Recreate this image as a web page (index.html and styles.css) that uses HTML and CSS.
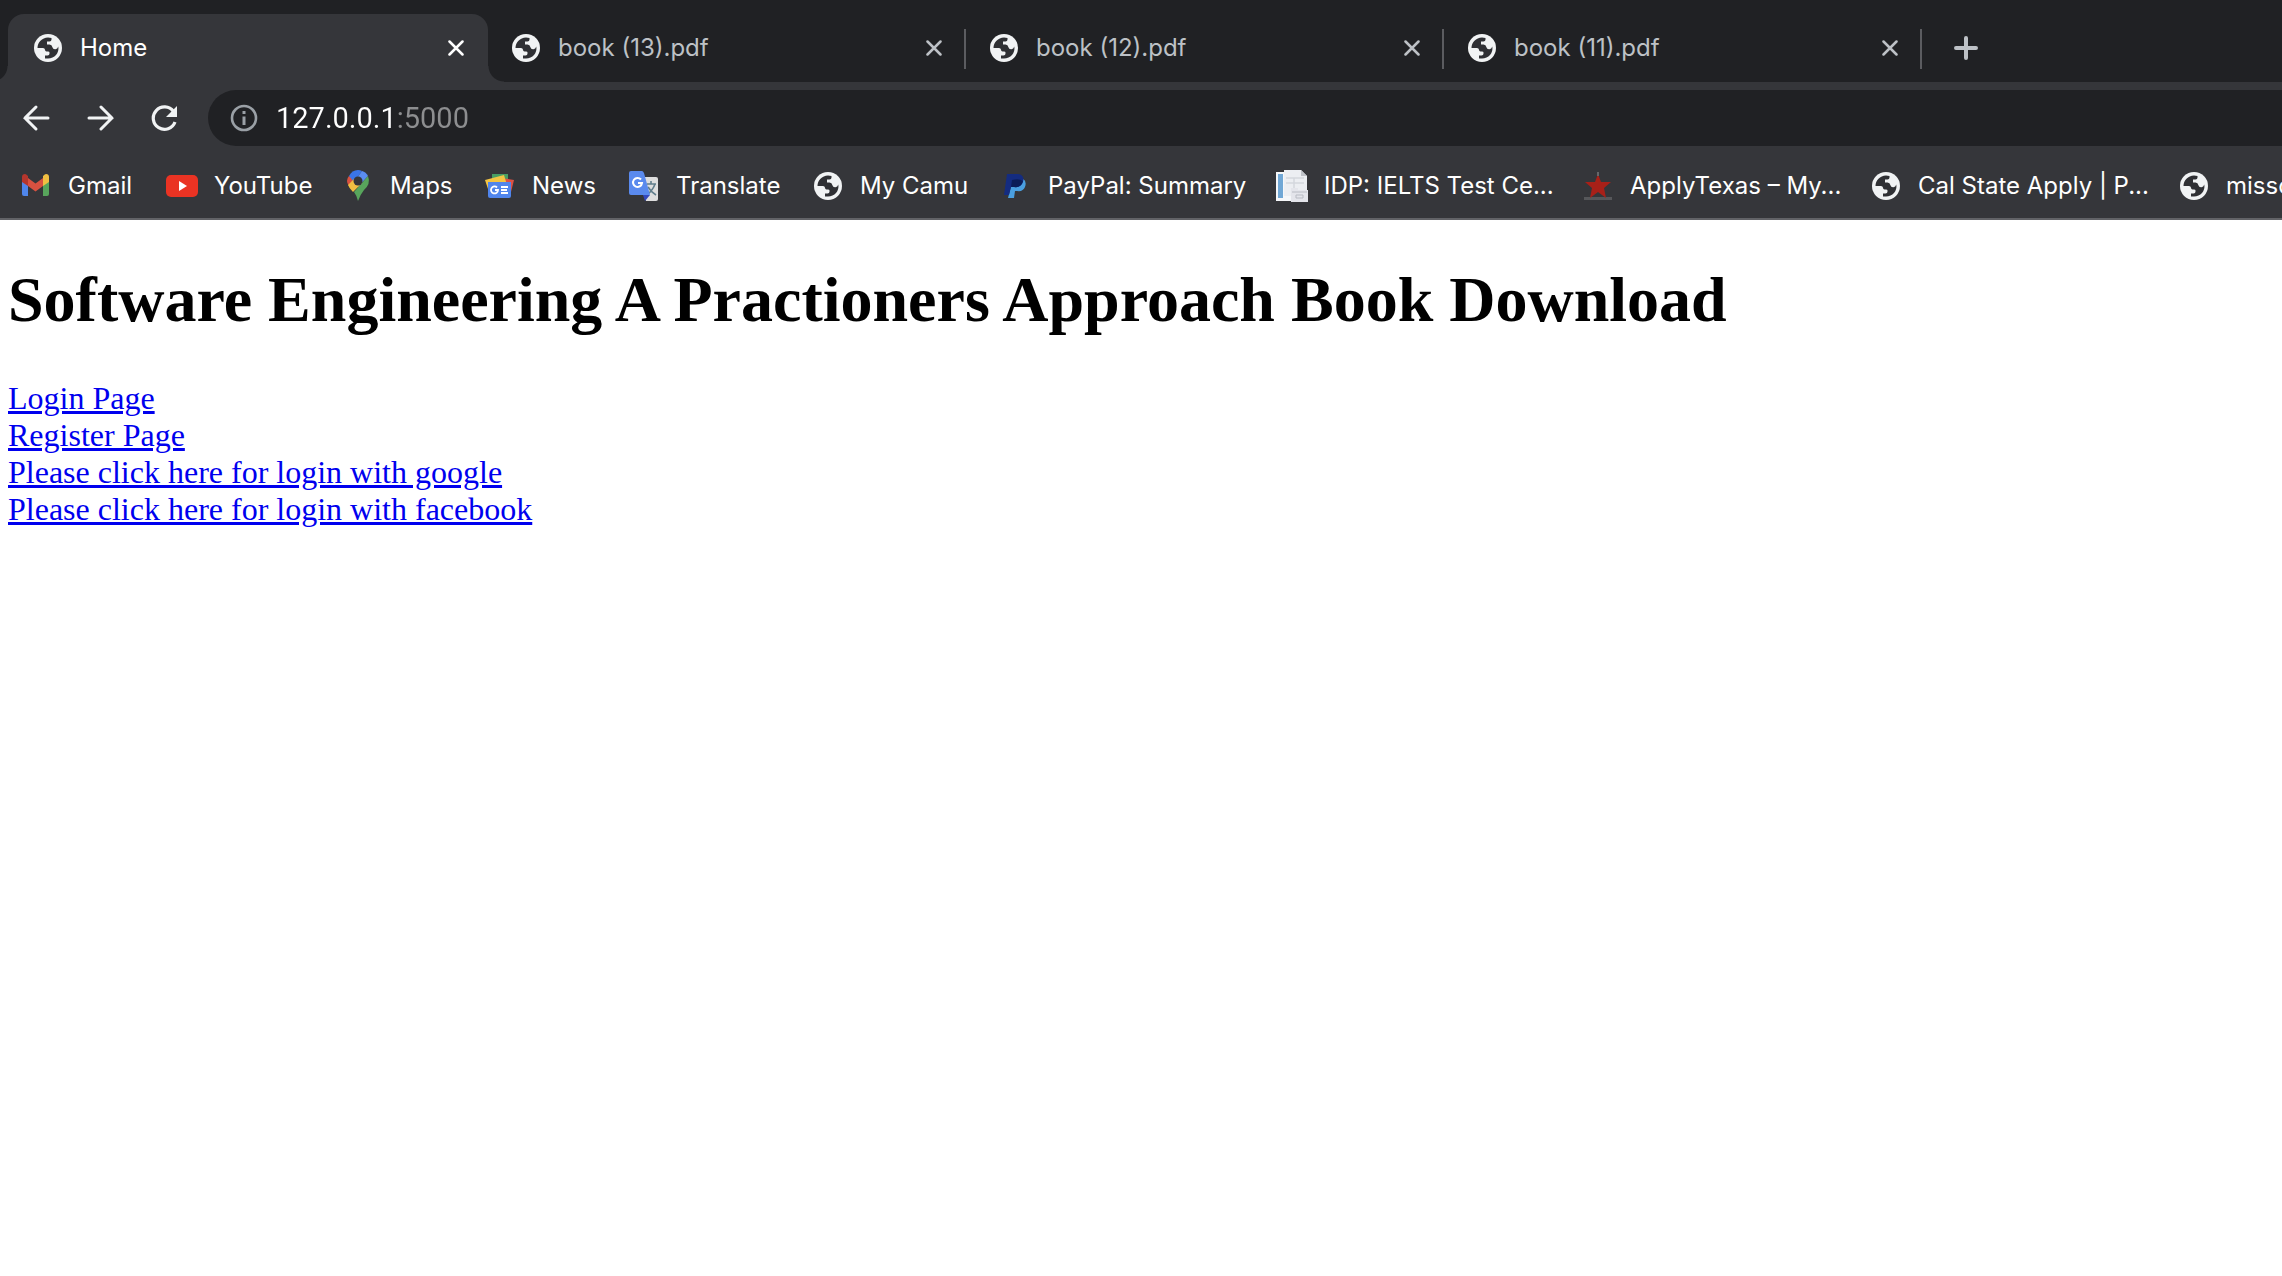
FILE: index.html
```html
<!DOCTYPE html>
<html lang="en">
<head>
<meta charset="utf-8">
<title>Home</title>
<link rel="stylesheet" href="styles.css">
</head>
<body>
<svg class="defs" aria-hidden="true">
  <symbol id="globe" viewBox="0 0 28 28">
    <circle cx="14" cy="14" r="14" fill="#f1f3f4"/>
    <path fill="#2f3034" d="M3.5 14C3.5 8.5 8 3.8 14 3.5L17.5 4V5.5Q17.5 7.5 15.5 7.5H13V10.5H15.5Q18 10.7 18.3 13Q19 15.7 21.5 15.3Q23.500 15 24.3 12.500C25.500 19 20.500 24.500 14 24.500H11V21.500H13.500Q15.500 21.300 15.500 19.500V18.500Q15.500 17.500 14 17.500H12.500Q11 17.500 11 15.800Q10.800 14 9 14Z"/>
  </symbol>
  <symbol id="close" viewBox="0 0 16 16">
    <path d="M1.500 1.500L14.500 14.500M14.500 1.500L1.500 14.500" fill="none" stroke="currentColor" stroke-width="2.500" stroke-linecap="round"/>
  </symbol>
</svg>
<header class="browser">
  <nav class="tabs" aria-label="Tabs">
    <div class="tab active">
      <svg class="favicon"><use href="#globe"/></svg>
      <span class="tab-title">Home</span>
      <button class="close" aria-label="Close Home"><svg><use href="#close"/></svg></button>
    </div>
    <div class="tab">
      <svg class="favicon"><use href="#globe"/></svg>
      <span class="tab-title">book (13).pdf</span>
      <button class="close" aria-label="Close book (13).pdf"><svg><use href="#close"/></svg></button>
    </div>
    <div class="tab">
      <svg class="favicon"><use href="#globe"/></svg>
      <span class="tab-title">book (12).pdf</span>
      <button class="close" aria-label="Close book (12).pdf"><svg><use href="#close"/></svg></button>
    </div>
    <div class="tab">
      <svg class="favicon"><use href="#globe"/></svg>
      <span class="tab-title">book (11).pdf</span>
      <button class="close" aria-label="Close book (11).pdf"><svg><use href="#close"/></svg></button>
    </div>
    <button class="new-tab" aria-label="New tab">
      <svg viewBox="0 0 24 24"><path d="M12 2V22M2 12H22" fill="none" stroke="currentColor" stroke-width="4" stroke-linecap="round"/></svg>
    </button>
  </nav>
  <div class="toolbar">
    <button class="nav-button" aria-label="Back">
      <svg viewBox="0 0 28 28"><path d="M14 3L3 14L14 25M3 14H26" fill="none" stroke="currentColor" stroke-width="3" stroke-linecap="round"/></svg>
    </button>
    <button class="nav-button" aria-label="Forward">
      <svg viewBox="0 0 28 28"><path d="M15 3L26 14L15 25M26 14H3" fill="none" stroke="currentColor" stroke-width="3" stroke-linecap="round"/></svg>
    </button>
    <button class="nav-button" aria-label="Reload">
      <svg viewBox="0 0 28 28"><path d="M23.500 7.500A11.200 11.200 0 1 0 25 18" fill="none" stroke="currentColor" stroke-width="3.200"/><path d="M27 2V13H16Z" fill="currentColor"/></svg>
    </button>
    <label class="omnibox">
      <svg viewBox="0 0 28 28"><circle cx="14" cy="14" r="12" fill="none" stroke="currentColor" stroke-width="2.600"/><path d="M12.500 7H15.500V10H12.500ZM12.500 12.500H15.500V21H12.500Z" fill="currentColor"/></svg>
      <input type="text" value="127.0.0.1:5000" aria-label="Address">
    </label>
  </div>
  <nav class="bookmarks" aria-label="Bookmarks">
    <a href="#"><svg viewBox="0 0 32 32"><path d="M2 10V24Q2 26 4 26H8V13Z" fill="#4f86ec"/><path d="M23 13V26H27Q29 26 29 24V10Z" fill="#58a55c"/><path d="M8 8L15.500 13.500L23 8V16L15.500 21.500L8 16Z" fill="#d85140"/><path d="M2 11V7Q2 4 5 4Q6 4 8 6V16L2 12Z" fill="#b5362d"/><path d="M29 11V7Q29 4 26 4Q25 4 23 6V16L29 12Z" fill="#f1bf42"/></svg><span>Gmail</span></a>
    <a href="#"><svg viewBox="0 0 32 32"><rect x="0" y="5" width="32" height="22" rx="5" fill="#ea3323"/><path d="M13 11V21L21 16Z" fill="#fff"/></svg><span>YouTube</span></a>
    <a href="#"><svg viewBox="0 0 32 32"><path d="M7 6L16 11L10 20Q5 14 5 11Q5 8 7 6Z" fill="#d85140"/><path d="M7 6Q10 0 16 0Q18 0 20 1L12 12Z" fill="#3a75e8"/><path d="M20 1Q24 2 26 6L16 17L12 12Z" fill="#5a8df0"/><path d="M26 6Q29 14 22 20Q18 25 16 31Q15 26 12 22Z" fill="#58a55c"/><path d="M6 15L12 9L20 13L11 22Q7 18 6 15Z" fill="#f1bf42"/><circle cx="16" cy="11" r="4.500" fill="#35363a"/></svg><span>Maps</span></a>
    <a href="#"><svg viewBox="0 0 32 32"><rect x="8" y="4" width="16" height="12" fill="#489e63"/><path d="M18 8L30 10L27 22L17 18Z" fill="#dc5044"/><path d="M1 10L20 5L23 15L5 22Z" fill="#f3c443"/><path d="M4 12H27V26Q27 28 25 28H6Q4 28 4 26Z" fill="#5085ec"/><path d="M13 17.500A3.500 3.500 0 1 0 14 20H11M17 17H24M17 20H23M17 23H24" stroke="#fff" stroke-width="1.800" fill="none"/></svg><span>News</span></a>
    <a href="#"><svg viewBox="0 0 32 32"><path d="M14 7H28Q30 7 30 9V29Q30 31 28 31H18Z" fill="#dedede"/><path d="M19 14H28M23 11V14M27 14Q25 20 19 25M20 17Q23 22 28 25" stroke="#607d8b" stroke-width="1.600" fill="none"/><path d="M15 25H22L17 31Z" fill="#3448bd"/><path d="M3 1H14Q15 1 16 3L22 25H3Q1 25 1 23V3Q1 1 3 1Z" fill="#5a8aee"/><path d="M13 9.500A4.500 4.500 0 1 0 14 13H10" stroke="#fff" stroke-width="2" fill="none"/></svg><span>Translate</span></a>
    <a href="#"><svg viewBox="0 0 32 32"><use href="#globe" x="2" y="2" width="28" height="28"/></svg><span>My Camu</span></a>
    <a href="#"><svg viewBox="0 0 32 32"><path d="M13 9H23Q27 11 25 17Q23 22 17 21H15L14 28H8Z" fill="#4a9fe0"/><path d="M7 4H18Q25 5 23 12Q21 18 14 17H11L9 25H4Z" fill="#142c80"/><path d="M12 10Q19 8 23 11Q21 18 14 17H11Z" fill="#0b1d58"/></svg><span>PayPal: Summary</span></a>
    <a href="#"><svg viewBox="0 0 32 32"><path d="M0 2H16V31H0Z" fill="#f5f7f9"/><path d="M2 4H7V28H2Z" fill="#70a7d5"/><path d="M8 0H25L31 6V26H8Z" fill="#eceef2"/><path d="M25 0V6H31Z" fill="#bfc2c8"/><path d="M10 8H28M10 13H28M18 8V20" stroke="#d4d7dd" stroke-width="1.500"/><path d="M15 18H22V20H32V32H15Z" fill="#e4e5eb"/><path d="M16 22H31M20 25H27V28H20Z" stroke="#b8bbc3" fill="none"/></svg><span>IDP: IELTS Test Ce...</span></a>
    <a href="#"><svg viewBox="0 0 32 32"><path d="M2 27H30V30H2Z" fill="#56575a"/><path d="M16 4L19 12H29L22 18L24 28L16 22L8 28L10 18L3 12H13Z" fill="#a82018"/><path d="M15 2H17V6H15Z" fill="#66676a"/></svg><span>ApplyTexas – My...</span></a>
    <a href="#"><svg viewBox="0 0 32 32"><use href="#globe" x="2" y="2" width="28" height="28"/></svg><span>Cal State Apply | P...</span></a>
    <a href="#"><svg viewBox="0 0 32 32"><use href="#globe" x="2" y="2" width="28" height="28"/></svg><span>misso</span></a>
  </nav>
</header>
<main class="page">
  <h1>Software Engineering A Practioners Approach Book Download</h1>
  <a href="#">Login Page</a><br>
  <a href="#">Register Page</a><br>
  <a href="#">Please click here for login with google</a><br>
  <a href="#">Please click here for login with facebook</a>
</main>
</body>
</html>
```
FILE: styles.css
```css
* { box-sizing: border-box; }
body { margin: 0; background: #fff; }
.defs { position: absolute; width: 0; height: 0; }
.browser {
  background: #35363a;
  border-bottom: 2px solid #626367;
  font-family: Inter, Roboto, sans-serif;
  font-size: 24px;
  color: #fff;
  overflow: hidden;
}
button { padding: 0; border: 0; background: none; color: inherit; display: flex; align-items: center; justify-content: center; }
svg { display: block; flex: none; }

.tabs { display: flex; height: 82px; padding: 14px 0 0 8px; background: #202124; }
.tab { position: relative; display: flex; align-items: center; width: 478px; height: 68px; padding: 0 22px 0 26px; color: #bdc1c6; }
.tab:not(.active)::after { content: ""; position: absolute; right: -2px; top: 15px; width: 2px; height: 40px; background: #5b5c60; }
.active { color: #fff; }
.active::before { content: ""; position: absolute; inset: 0 -2px 0 0; background: #35363a; border-radius: 16px 16px 0 0; }
/* the outward curves at the foot of the active tab */
.active::after {
  content: ""; position: absolute; left: -16px; right: -18px; bottom: 0; height: 16px;
  background:
    radial-gradient(circle at 0 0, transparent 15px, #35363a 16px) left / 16px 16px no-repeat,
    radial-gradient(circle at 100% 0, transparent 15px, #35363a 16px) right / 16px 16px no-repeat;
}
.tab > * { position: relative; z-index: 1; }
.favicon { width: 28px; height: 28px; }
.tab-title { flex: 1; margin-left: 18px; padding-bottom: 2px; }
.close svg { width: 16px; height: 16px; }
.new-tab { width: 92px; color: #bdc1c6; }
.new-tab svg { width: 24px; height: 24px; }

.toolbar { display: flex; gap: 36px; height: 64px; padding: 8px 0 0 22px; color: #f1f3f4; }
.nav-button svg { width: 28px; height: 28px; }
.omnibox { display: flex; flex: 1; align-items: center; gap: 18px; height: 56px; margin-left: -6px; padding-left: 22px; border-radius: 28px 0 0 28px; background: #202124; color: #9aa0a6; }
.omnibox svg { width: 28px; height: 28px; }
/* the host is white, the port is dimmed */
.omnibox input {
  flex: 1; padding: 0; border: 0; outline: 0;
  font-family: Roboto, sans-serif; font-size: 29px; color: #fff;
  background: linear-gradient(90deg, #fff 121px, #8d8e90 121px);
  -webkit-background-clip: text; background-clip: text;
  -webkit-text-fill-color: transparent;
}

.bookmarks {
  display: grid;
  grid-template-columns: 146px 176px 142px 144px 184px 188px 276px 306px 288px 308px auto;
  height: 72px; padding: 8px 0 0 20px; align-items: center; white-space: nowrap;
}
.bookmarks a { display: flex; align-items: center; gap: 16px; color: inherit; text-decoration: none; }
.bookmarks svg { width: 32px; height: 32px; }
.bookmarks span { padding-bottom: 2px; }

.page { padding: 0 8px; font-family: "Liberation Serif", "Times New Roman", serif; font-size: 32px; overflow: hidden; }
.page h1 { margin: 43px 0; font-size: 64px; color: #000; }
.page a { color: #0000ee; }
```
